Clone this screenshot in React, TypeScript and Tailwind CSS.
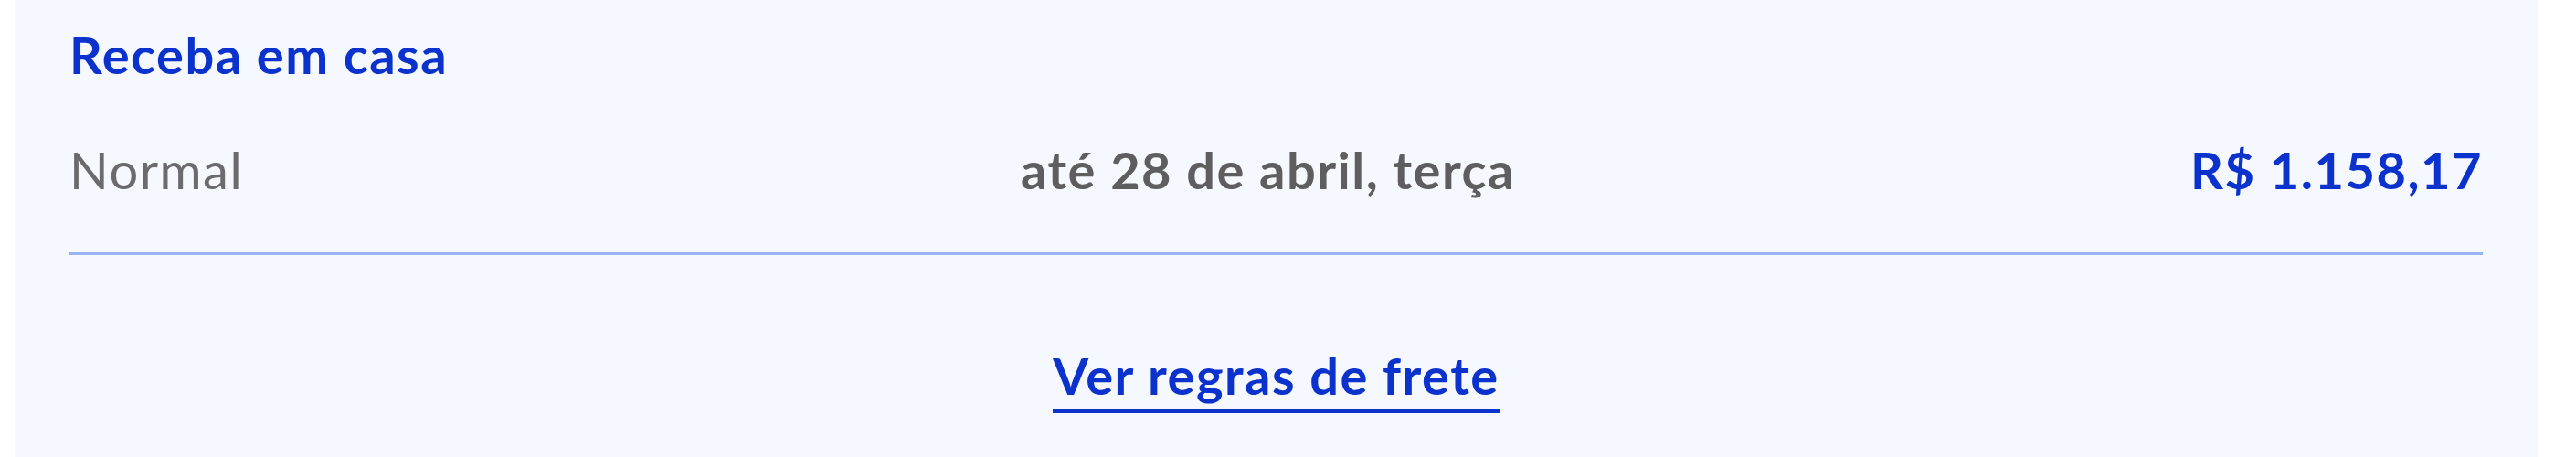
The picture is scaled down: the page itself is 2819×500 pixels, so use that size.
import React from 'react';

const ShippingOptions: React.FC = () => {
  const options = [
    { name: 'Normal', eta: 'até 28 de abril, terça', price: 'R$ 1.158,17' },
  ];

  return (
    <div className="min-h-[500px] bg-white pl-4 pr-[42px] font-['Lato',_sans-serif] tracking-[1.5px]">
      <div className="min-h-[500px] bg-[#f5f8fe] px-[60px] pt-[28px]">
        <h2 className="text-[56px] leading-[64px] font-bold text-[#0b32cc]">Receba em casa</h2>

        {options.map((option) => (
          <div key={option.name} className="mt-[62px] grid grid-cols-3 items-center text-[56px] leading-[64px]">
            <span className="text-[#6b6b6b]">{option.name}</span>
            <span className="pr-[18px] text-center font-bold text-[#5e5e5e]">{option.eta}</span>
            <span className="text-right font-bold text-[#0b32cc]">{option.price}</span>
          </div>
        ))}

        <div className="mt-[58px] h-[3px] bg-[#98b4f2]" />

        <div className="mt-[100px] flex justify-center">
          <a href="#" className="inline-block border-b-4 border-[#0b32cc] pb-[5px] text-[56px] leading-[64px] font-bold text-[#0b32cc]">
            Ver regras de frete
          </a>
        </div>
      </div>
    </div>
  );
};

export default function App() {
  return <ShippingOptions />;
}
